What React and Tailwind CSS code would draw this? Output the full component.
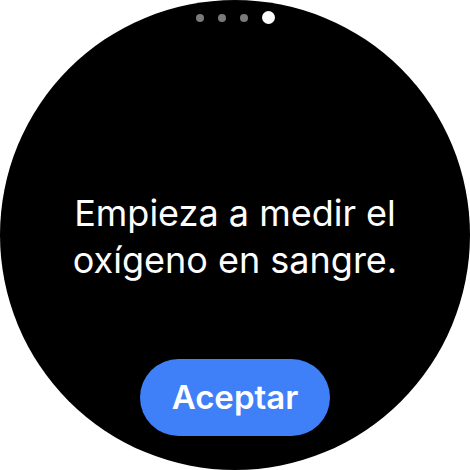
export default function App() {
  return (
    <div className="w-[470px] h-[470px] bg-white overflow-hidden" style={{ fontFamily: "Inter, 'Noto Sans', sans-serif" }}>
      <div className="w-[470px] h-[470px] rounded-full bg-black flex flex-col items-center">
        {/* page indicator */}
        <div className="flex items-center gap-[14px] mt-[11px] h-[13px]">
          <span className="w-2 h-2 rounded-full bg-[#7a7a7a]" />
          <span className="w-2 h-2 rounded-full bg-[#7a7a7a]" />
          <span className="w-2 h-2 rounded-full bg-[#7a7a7a]" />
          <span className="w-[13px] h-[13px] rounded-full bg-white" />
        </div>

        <p className="mt-[166px] text-white text-[36px] leading-[47px] text-center">
          Empieza a medir el
          <br />
          oxígeno en sangre.
        </p>

        <button className="mt-[75px] w-[190px] h-[77px] rounded-full bg-[#3f7ff7] text-white text-[33px] font-semibold">
          Aceptar
        </button>
      </div>
    </div>
  );
}
